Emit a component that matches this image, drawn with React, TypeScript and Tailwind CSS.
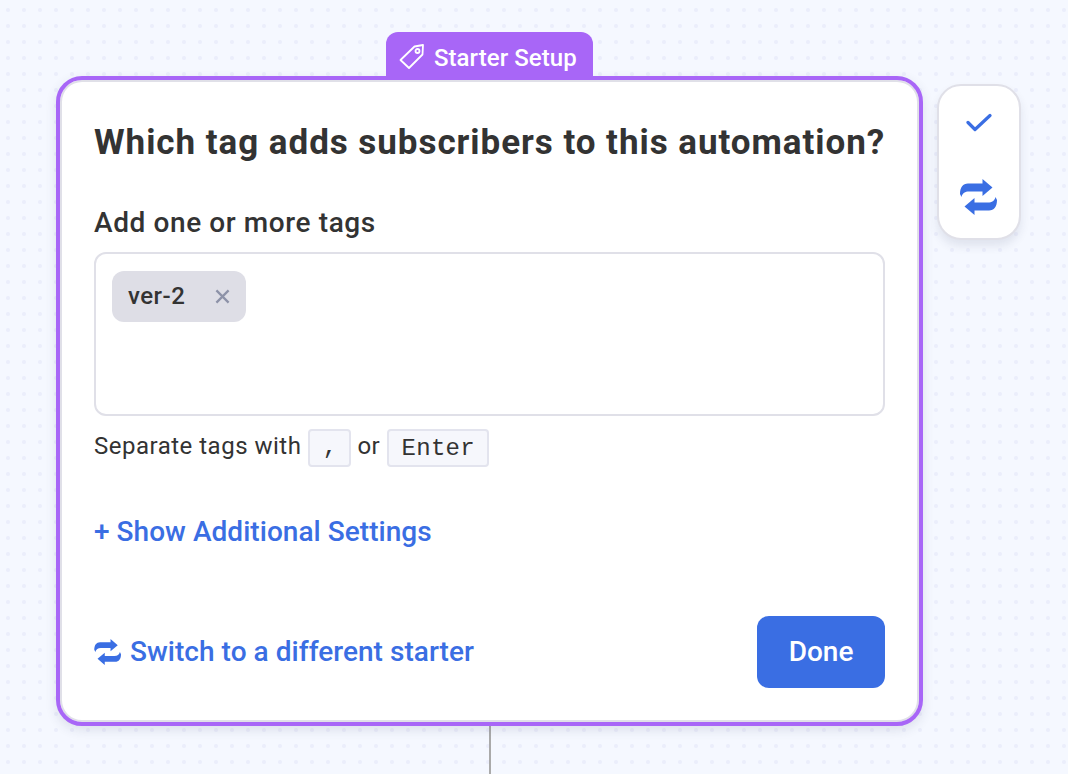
import React from "react";

function Swap({ className }: { className: string }) {
  return (
    <svg viewBox="0 0 38 36" className={className} fill="#3a6ee3">
      <path d="M0 15C0 8.500 3 4.500 8 4.500H22.500V0L32.500 8.500L22.500 17V12.500H9C5 12.500 2.500 14 1.500 18Z" />
      <path d="M37 21C37 27.500 34 31.500 29 31.500H14.500V36L4.500 27.500L14.500 19V23.500H28C32 23.500 34.500 22 35.500 18Z" />
    </svg>
  );
}

export default function App() {
  return (
    <div className="h-[774px] w-[1068px] overflow-hidden bg-[#f5f8ff] bg-[radial-gradient(circle,#ebeefb_1.5px,transparent_2.5px)] bg-[size:16px_16px] bg-[position:0px_2px] pt-[76px] pl-[56px] font-['Roboto',sans-serif] text-[#333333]">
      <div className="flex items-start">
        <div className="flex w-[867px] flex-col items-center">
          <div className="relative h-[650px] w-full rounded-[26px] border-4 border-[#a866f7] bg-white shadow-[0_4px_12px_rgba(40,50,90,0.12),inset_0_0_0_2px_#e0e0e8]">
            <div className="absolute left-[326px] top-[-48px] flex h-[46px] w-[207px] items-start gap-[9px] rounded-t-[12px] bg-[#a866f7] pl-[13px] pt-[11px] text-white">
              <svg viewBox="0 0 26 26" className="h-[26px] w-[26px]" fill="none" stroke="white" strokeWidth="1.800" strokeLinejoin="round">
                <path d="M1.500 17L15.500 3.500L24 2L23.500 11.500L10 25Z" />
                <circle cx="18.500" cy="8" r="2" />
              </svg>
              <span className="text-[24px] font-medium leading-[30px] tracking-[0.05px]">Starter Setup</span>
            </div>
            <div className="flex h-full flex-col px-[34px] pt-[41px] pb-[34px]">
              <h1 className="text-[35px] font-bold leading-[44px] tracking-[0.95px] whitespace-nowrap">Which tag adds subscribers to this automation?</h1>
              <div className="mt-[42px] text-[28px] font-medium leading-[32px] tracking-[0.6px]">Add one or more tags</div>
              <div className="mt-[13px] h-[164px] w-[791px] rounded-[12px] border-2 border-[#e0e0e8] px-[16px] pt-[17px]">
                <div className="inline-flex h-[51px] w-[134px] items-center justify-between rounded-[12px] bg-[#dedee6] pl-[16px] pr-[16px]">
                  <span className="mb-[1px] text-[24px] font-medium tracking-[0.5px]">ver-2</span>
                  <svg viewBox="0 0 16 16" className="h-[15px] w-[15px]" stroke="#8d92a8" strokeWidth="2.400" fill="none">
                    <path d="M1.500 1.500L14.500 14.500M14.500 1.500L1.500 14.500" />
                  </svg>
                </div>
              </div>
              <div className="mt-[13px] flex h-[38px] items-center text-[24px] tracking-[0.5px]">
                <span className="mb-[4px]">Separate tags with</span>
                <kbd className="ml-[7px] flex h-[38px] w-[43px] items-center justify-center rounded-[4px] border-2 border-[#e3e4ee] bg-[#f6f7fc] font-['Liberation_Mono',monospace] text-[24px] tracking-normal">,</kbd>
                <span className="mb-[4px] ml-[6px]">or</span>
                <kbd className="ml-[7px] flex h-[38px] w-[102px] items-center justify-center rounded-[4px] border-2 border-[#e3e4ee] bg-[#f6f7fc] pt-[2px] font-['Liberation_Mono',monospace] text-[24px] tracking-[0.3px]">Enter</kbd>
              </div>
              <div className="mt-[45px] text-[28px] font-medium leading-[40px] tracking-[0.04px] text-[#3a6ee3]">+ Show Additional Settings</div>
              <div className="mt-auto flex items-center justify-between">
                <div className="flex items-center gap-[8px] text-[28px] font-medium tracking-[0.04px] text-[#3a6ee3]">
                  <Swap className="h-[26px] w-[28px]" />
                  <span>Switch to a different starter</span>
                </div>
                <button className="h-[72px] w-[128px] rounded-[12px] bg-[#3a6ee3] text-[28px] font-medium text-white">Done</button>
              </div>
            </div>
          </div>
          <div className="h-[60px] w-[2px] bg-[#aaaaaa]" />
        </div>
        <div className="ml-[14px] mt-[8px] flex h-[156px] w-[84px] flex-col items-center rounded-[24px] border-2 border-[#e0e0e8] bg-white pt-[27px] shadow-[0_6px_10px_rgba(40,50,90,0.1)]">
          <svg viewBox="0 0 26 20" className="h-[20px] w-[26px]" fill="none" stroke="#3a6ee3" strokeWidth="3.200" strokeLinecap="round" strokeLinejoin="round">
            <path d="M2 9.500L9 16.500L24 2.500" />
          </svg>
          <Swap className="mt-[46px] h-[36px] w-[38px]" />
        </div>
      </div>
    </div>
  );
}
